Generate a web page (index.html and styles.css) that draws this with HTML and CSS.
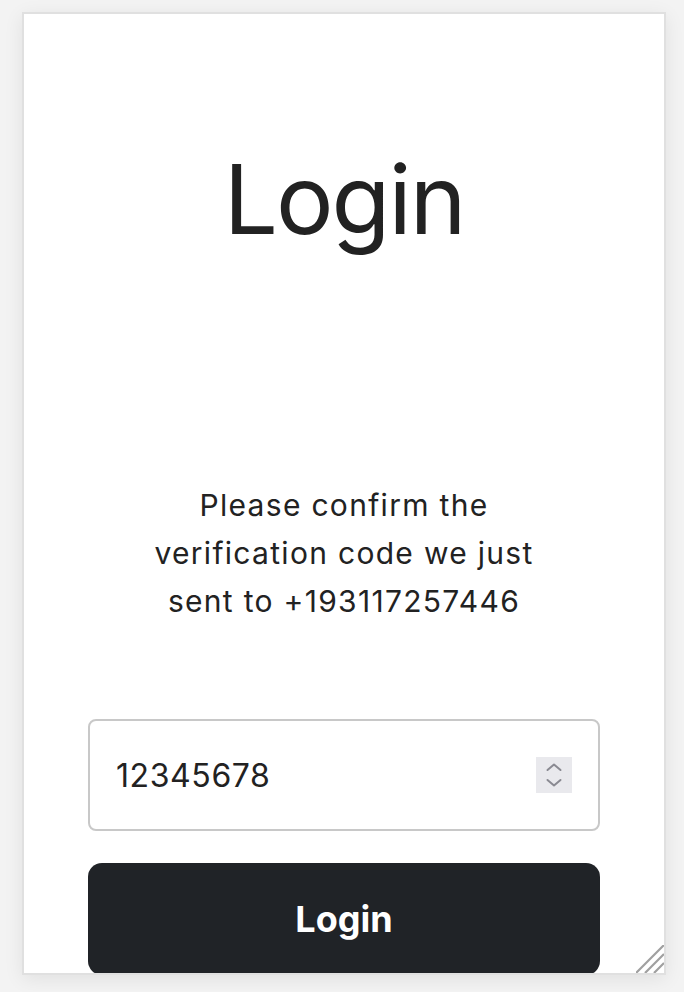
FILE: index.html
```html
<!DOCTYPE html>
<html lang="en">
<head>
<meta charset="utf-8">
<title>Login</title>
<link rel="stylesheet" href="styles.css">
</head>
<body>
<main class="card">
  <h1 class="title">Login</h1>
  <p class="message">Please confirm the verification code we just sent to +193117257446</p>
  <div class="field">
    <input class="code" type="text" value="12345678" aria-label="Verification code">
    <span class="spinner" aria-hidden="true">
      <svg width="36" height="36" viewBox="0 0 36 36">
        <path d="M11.5 13 L18 7.5 L24.5 13" fill="none" stroke="#8a8a92" stroke-width="2" stroke-linecap="round" stroke-linejoin="round"/>
        <path d="M11.5 23 L18 28.5 L24.5 23" fill="none" stroke="#8a8a92" stroke-width="2" stroke-linecap="round" stroke-linejoin="round"/>
      </svg>
    </span>
  </div>
  <button class="submit" type="button">Login</button>
  <svg class="resizer" width="28" height="28" viewBox="0 0 28 28" aria-hidden="true">
    <path d="M0 28 L28 0 M9 28 L28 9 M18 28 L28 18" stroke="#a0a0a0" stroke-width="2.2" fill="none"/>
  </svg>
</main>
</body>
</html>
```
FILE: styles.css
```css
html, body {
  margin: 0;
  padding: 0;
}
body {
  background: #f3f3f3;
  font-family: Inter, "Noto Sans", sans-serif;
  color: #222222;
  padding: 12px 0 0 22px;
  height: 992px;
  box-sizing: border-box;
  overflow: hidden;
}
.card {
  position: relative;
  box-sizing: border-box;
  width: 644px;
  height: 963px;
  background: #ffffff;
  border: 2px solid #e0e0e0;
  box-shadow: 0 4px 18px rgba(0, 0, 0, 0.08);
  padding: 0 64px;
  display: flex;
  flex-direction: column;
  align-items: stretch;
  overflow: hidden;
}
.title {
  margin: 127px 0 0;
  font-size: 96px;
  font-weight: 400;
  line-height: 116px;
  text-align: center;
  letter-spacing: -2px;
}
.message {
  margin: 224px auto 0;
  max-width: 400px;
  font-size: 30px;
  line-height: 48px;
  text-align: center;
  letter-spacing: 1.3px;
}
.field {
  position: relative;
  margin-top: 94px;
  flex: none;
}
.code {
  display: block;
  width: 100%;
  height: 112px;
  box-sizing: border-box;
  border: 2px solid #c8c8c8;
  border-radius: 8px;
  padding: 0 26px;
  font-family: Inter, "Noto Sans", sans-serif;
  font-size: 32px;
  color: #222222;
  letter-spacing: 0.6px;
  background: #ffffff;
  outline: none;
}
.spinner {
  position: absolute;
  right: 28px;
  top: 38px;
  width: 36px;
  height: 36px;
  background: #e9e9ed;
  display: block;
}
.spinner svg {
  display: block;
}
.submit {
  flex: none;
  margin-top: 32px;
  height: 112px;
  border: none;
  border-radius: 14px;
  background: #202327;
  color: #ffffff;
  font-family: Inter, "Noto Sans", sans-serif;
  font-size: 36px;
  font-weight: 700;
}
.resizer {
  position: absolute;
  right: 0;
  bottom: 0;
  display: block;
}
```
